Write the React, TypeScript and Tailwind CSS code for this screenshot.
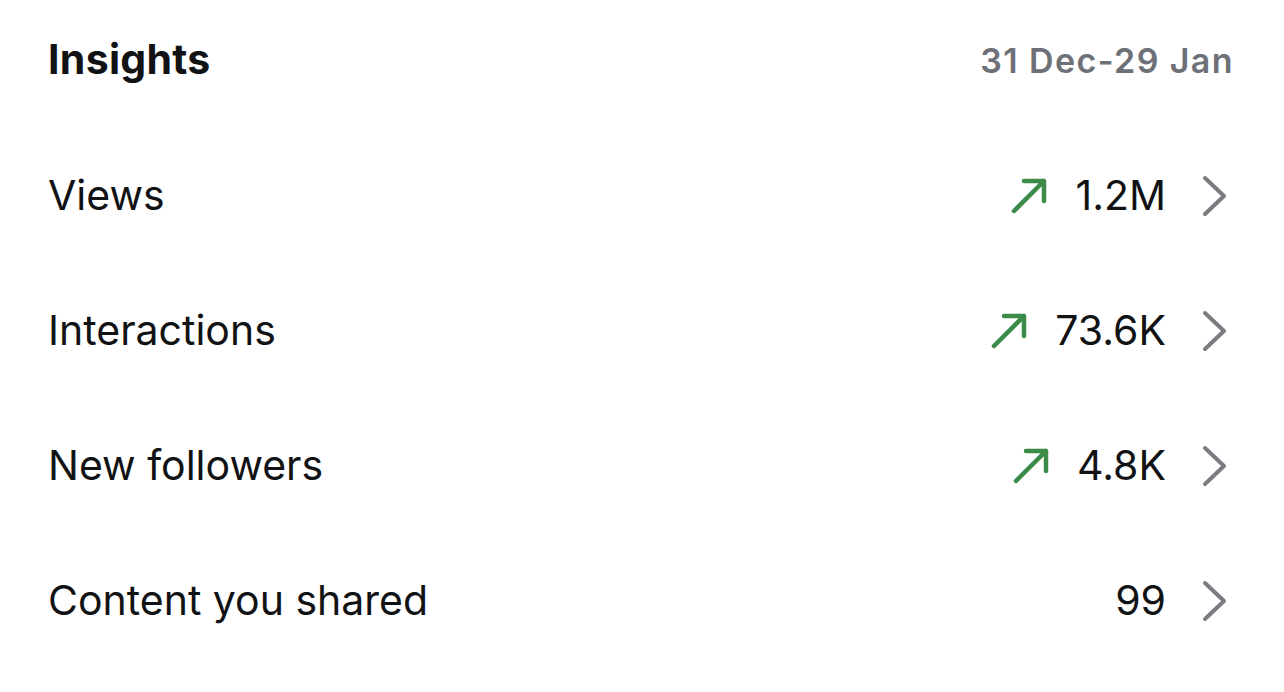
const rows = [
  { label: "Views", value: "1.2M", up: true },
  { label: "Interactions", value: "73.6K", up: true },
  { label: "New followers", value: "4.8K", up: true },
  { label: "Content you shared", value: "99", up: false },
];

function TrendUp() {
  return (
    <svg width="36" height="36" viewBox="0 0 36 36" fill="none" className="shrink-0">
      <path
        d="M3 33 L33 3 M13 3 H33 V23"
        stroke="#3d8b48"
        strokeWidth="4.5"
        strokeLinecap="round"
        strokeLinejoin="round"
      />
    </svg>
  );
}

function Chevron() {
  return (
    <svg width="26" height="42" viewBox="0 0 26 42" fill="none" className="shrink-0">
      <path
        d="M3 3 L22 21 L3 39"
        stroke="#7b7c82"
        strokeWidth="4"
        strokeLinecap="round"
        strokeLinejoin="round"
      />
    </svg>
  );
}

export default function App() {
  return (
    <div
      className="w-[1284px] h-[692px] bg-white pl-[48px] pr-[50px] text-[#111214]"
      style={{ fontFamily: "Inter, 'Noto Sans', sans-serif" }}
    >
      <div className="mb-[8px] flex h-[120px] items-center justify-between">
        <h1 className="text-[41px] font-bold tracking-[0.3px]">Insights</h1>
        <span className="text-[34px] font-semibold text-[#6e7077] tracking-[1.4px]">31 Dec-29 Jan</span>
      </div>
      {rows.map((r) => (
        <div key={r.label} className="flex h-[135px] items-center justify-between">
          <span className="text-[41px]">{r.label}</span>
          <div className="flex items-center">
            {r.up && <TrendUp />}
            <span className="ml-[28px] text-[41px]">{r.value}</span>
            <div className="ml-[36px] mr-[6px]">
              <Chevron />
            </div>
          </div>
        </div>
      ))}
    </div>
  );
}
